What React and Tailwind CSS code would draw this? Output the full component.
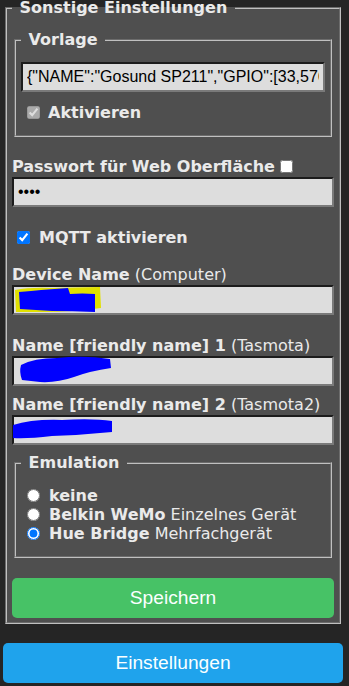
import React from 'react';

const INPUT =
  "block w-full h-[30px] px-[4px] bg-[#dddddd] text-black text-[16px] font-['Liberation_Sans',Arial,sans-serif] border-2 border-t-[#1c1c1c] border-l-[#1c1c1c] border-b-[#7a7a7a] border-r-[#7a7a7a] outline-none";

function Legend({ children }) {
  return (
    <legend className="px-[2px] font-bold leading-[19px] whitespace-pre">
      {'\u00a0' + children + '\u00a0'}
    </legend>
  );
}

// censored values in the original screenshot: freehand marker strokes
function Scribble({ kind }) {
  return (
    <svg className="absolute left-0 top-0 overflow-visible pointer-events-none" width="321" height="30">
      {kind === 'device' && (
        <>
          <path d="M3 5 Q18 2 40 3 L88 2 L89 23 Q60 27 30 27 L4 27 Z" fill="#e0e000" />
          <path d="M7 7 Q20 6 29 5 L56 3 L58 9 Q70 8 83 9 L83 27 Q60 26 40 26 L8 24 Z" fill="#0000ff" />
        </>
      )}
      {kind === 'name1' && (
        <path d="M9 9 Q22 2 45 2 Q72 -1 98 3 L99 12 Q78 15 62 21 Q45 27 28 26 L10 24 Q7 16 9 9 Z" fill="#0000ff" />
      )}
      {kind === 'name2' && (
        <path d="M1 10 Q20 4 50 5 Q80 3 100 6 L100 17 Q70 20 40 21 Q15 24 1 23 Z" fill="#0000ff" />
      )}
    </svg>
  );
}

function Field({ bold, hint, scribble, mt }) {
  return (
    <div className={mt}>
      <div className="leading-[19px]">
        <b>{bold}</b> {hint}
      </div>
      <div className="relative mt-[1px]">
        <input className={INPUT} defaultValue="" readOnly />
        <Scribble kind={scribble} />
      </div>
    </div>
  );
}

function Radio({ checked, bold, rest }) {
  return (
    <label className="flex items-center h-[19px]">
      <input
        type="radio"
        name="emu"
        defaultChecked={checked}
        className="m-0 ml-[6px] mr-[9px] w-[13px] h-[13px]"
      />
      <b>{bold}</b>
      {rest && <span className="whitespace-pre"> {rest}</span>}
    </label>
  );
}

export default function App() {
  return (
    <div className="min-h-[686px] overflow-hidden bg-[#252525] text-[#eaeaea] text-[16px] font-['DejaVu_Sans',Verdana,sans-serif]">
      <div className="w-[340px] ml-[3px] -mt-[2px]">
        <fieldset className="mx-[2px] px-[5px] pt-[5px] pb-[4px] bg-[#4f4f4f] border-2 [border-style:groove] border-[#c0c0c0]">
          <Legend>Sonstige Einstellungen</Legend>

          <fieldset className="mt-2 mx-[2px] px-[5px] pt-[5px] pb-[5px] border-2 [border-style:groove] border-[#c0c0c0]">
            <Legend>Vorlage</Legend>
            <input
              className={INPUT + ' mt-2'}
              readOnly
              defaultValue={'{"NAME":"Gosund SP211","GPIO":[33,576,0,0,0,0,0,0,0,0,0,0,0,0],"FLAG":0,"BASE":18}'}
            />
            <label className="flex items-center h-[19px] mt-[11px] mb-2">
              <input type="checkbox" defaultChecked disabled className="m-0 ml-[6px] mr-[8px] w-[13px] h-[13px]" />
              <b>Aktivieren</b>
            </label>
          </fieldset>

          <label className="flex items-center h-[19px] mt-[20px]">
            <b>Passwort für Web Oberfläche</b>
            <input type="checkbox" className="m-0 ml-[5px] w-[13px] h-[13px]" />
          </label>
          <input type="password" className={INPUT + ' mt-[1px]'} readOnly defaultValue="****" />

          <label className="flex items-center h-[19px] mt-[21px]">
            <input type="checkbox" defaultChecked className="m-0 ml-[5px] mr-[9px] w-[13px] h-[13px]" />
            <b>MQTT aktivieren</b>
          </label>

          <Field mt="mt-[18px]" bold="Device Name" hint="(Computer)" scribble="device" />
          <Field mt="mt-[21px]" bold="Name [friendly name] 1" hint="(Tasmota)" scribble="name1" />
          <Field mt="mt-[9px]" bold="Name [friendly name] 2" hint="(Tasmota2)" scribble="name2" />

          <fieldset className="mt-2 mx-[2px] px-[5px] pt-[5px] pb-[5px] border-2 [border-style:groove] border-[#c0c0c0]">
            <Legend>Emulation</Legend>
            <div className="mt-[9px] mb-2">
              <Radio bold="keine" />
              <Radio bold="Belkin WeMo" rest="Einzelnes Gerät" />
              <Radio bold="Hue Bridge" rest="Mehrfachgerät" checked />
            </div>
          </fieldset>

          <button className="mt-[20px] w-full h-[40px] rounded-[5px] bg-[#47c266] text-[#faffff] text-[19.2px] font-['Liberation_Sans',Arial,sans-serif]">
            Speichern
          </button>
        </fieldset>

        <button className="mt-[19px] w-full h-[40px] rounded-[5px] bg-[#1fa3ec] text-[#faffff] text-[19.2px] font-['Liberation_Sans',Arial,sans-serif]">
          Einstellungen
        </button>
      </div>
    </div>
  );
}
